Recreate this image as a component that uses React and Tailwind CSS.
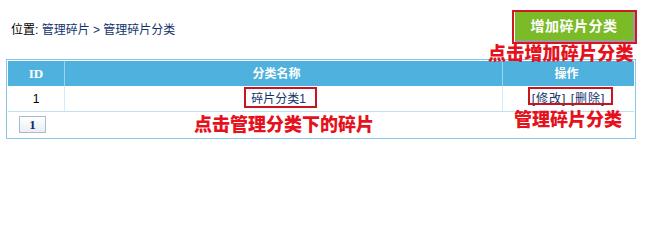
export default function App() {
  return (
    <div className="relative w-[645px] h-[219px] bg-white text-[12px] font-['Liberation_Sans','Noto_Sans_CJK_SC',sans-serif] text-black">
      {/* Top bar: breadcrumb + add button */}
      <div className="flex justify-between items-start h-[59px] pt-[10px] pl-[11px] pr-[8px]">
        <div className="mt-[12px] leading-[16px]">
          位置: <span className="text-[#12336b]">管理碎片</span>
          <span className="text-[#12336b]"> &gt; 管理碎片分类</span>
        </div>
        <div className="w-[125px] h-[34px] border-2 border-[#d01822] pl-[1px]">
          <button className="w-[120px] h-[30px] bg-[#7cbb28] border-r-2 border-b-2 border-[#9b9b9b] text-white font-bold text-[14px] leading-[28px] tracking-[0.5px]">
            增加碎片分类
          </button>
        </div>
      </div>

      {/* Table */}
      <div className="mx-[6px] w-[630px] border border-[#86c8e6] p-[1px]">
        <div className="flex h-[25px] bg-[#4fb1dd] text-white font-bold items-center">
          <div className="w-[56px] text-center font-['Liberation_Serif',serif] text-[13px]">ID</div>
          <div className="w-[1px] h-full bg-[#9fd3ec]" />
          <div className="w-[437px] text-center text-[12px] pr-[14px]">分类名称</div>
          <div className="w-[1px] h-full bg-[#9fd3ec]" />
          <div className="flex-1 text-center text-[12px] pr-[4px]">操作</div>
        </div>
        <div className="flex h-[26px] items-center border-b border-[#bfe2f2]">
          <div className="w-[56px] text-center">1</div>
          <div className="w-[1px] h-full bg-[#d4ecf7]" />
          <div className="w-[437px] flex justify-center pr-[10px]">
            <span className="text-[#12336b]">碎片分类1</span>
          </div>
          <div className="w-[1px] h-full bg-[#d4ecf7]" />
          <div className="flex-1 text-center text-[#12336b] tracking-[1px]">[修改] [删除]</div>
        </div>
        <div className="flex h-[25px] items-center pl-[11px]">
          <div className="w-[27px] h-[17px] border border-[#a9bccd] bg-gradient-to-b from-white to-[#e9eef3] text-center leading-[15px] font-bold text-[#0f2a6b] font-['Liberation_Serif',serif] text-[13px]">
            1
          </div>
        </div>
      </div>

      {/* Annotation overlays */}
      <div className="absolute left-[244px] top-[87px] w-[73px] h-[21px] border-2 border-[#c8141e]" />
      <div className="absolute left-[528px] top-[87px] w-[85px] h-[18px] border-2 border-[#c8141e]" />
      <div className="absolute left-[488px] top-[42px] text-[18px] leading-[24px] font-black text-[#e5121d] font-['Liberation_Serif','Noto_Sans_CJK_SC',serif] tracking-[0.2px]">
        点击增加碎片分类
      </div>
      <div className="absolute left-[194px] top-[113px] text-[18px] leading-[24px] font-black text-[#e5121d] font-['Liberation_Serif','Noto_Sans_CJK_SC',serif]">
        点击管理分类下的碎片
      </div>
      <div className="absolute left-[514px] top-[108px] text-[18px] leading-[24px] font-black text-[#e5121d] font-['Liberation_Serif','Noto_Sans_CJK_SC',serif]">
        管理碎片分类
      </div>
    </div>
  )
}
